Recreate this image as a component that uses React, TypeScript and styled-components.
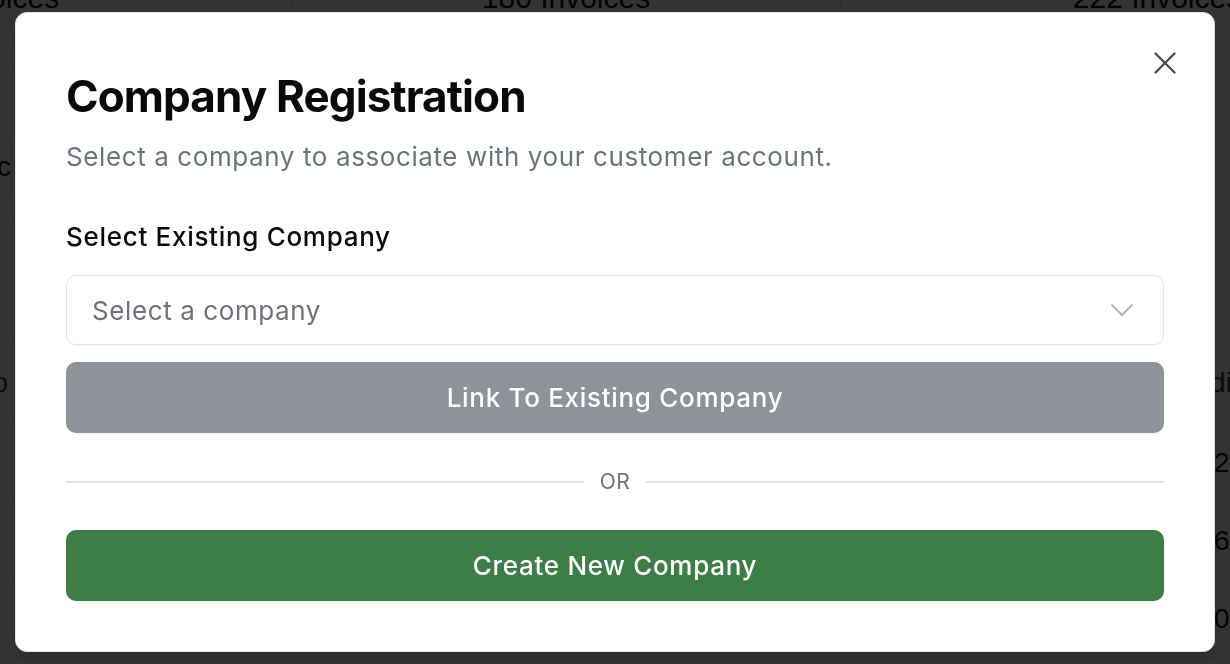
import React from "react";
import styled, { createGlobalStyle } from "styled-components";

const GlobalStyle = createGlobalStyle`
  html, body {
    margin: 0;
    padding: 0;
    background: #ffffff;
    overflow: hidden;
  }
  * {
    box-sizing: border-box;
  }
`;

const stats = [
  { label: "196 Invoices" },
  { label: "180 Invoices" },
  { label: "222 Invoices" },
];

const rows = [
  { id: 1, right: "2,450" },
  { id: 2, right: "6,120" },
  { id: 3, right: "0.00" },
  { id: 4, right: "1,300" },
];

const App = () => {
  return (
    <>
      <GlobalStyle />
      <Page>
        <StatRow>
          {stats.map((s) => (
            <StatCard key={s.label}>
              <StatLabel>{s.label}</StatLabel>
            </StatCard>
          ))}
        </StatRow>
        <Toolbar>
          <SearchBox>Sync</SearchBox>
        </Toolbar>
        <Table>
          <FilterRow />
          <TableRow $header>
            <LeftCell>Info</LeftCell>
            <RightCell>Credit</RightCell>
          </TableRow>
          {rows.map((r) => (
            <TableRow key={r.id}>
              <LeftCell />
              <RightCell $num>{r.right}</RightCell>
            </TableRow>
          ))}
        </Table>
      </Page>

      <Overlay />

      <Dialog role="dialog">
        <CloseButton aria-label="Close">
          <svg
            width="38"
            height="38"
            viewBox="0 0 24 24"
            fill="none"
            stroke="currentColor"
            strokeWidth="1.5"
            strokeLinecap="round"
            strokeLinejoin="round"
          >
            <path d="M18 6 6 18" />
            <path d="m6 6 12 12" />
          </svg>
        </CloseButton>

        <Title>Company Registration</Title>
        <Subtitle>Select a company to associate with your customer account.</Subtitle>

        <Label>Select Existing Company</Label>
        <SelectBox>
          <Placeholder>Select a company</Placeholder>
          <svg
            width="40"
            height="40"
            viewBox="0 0 24 24"
            fill="none"
            stroke="currentColor"
            strokeWidth="1.1"
            strokeLinecap="round"
            strokeLinejoin="round"
          >
            <path d="m6 9 6 6 6-6" />
          </svg>
        </SelectBox>

        <ActionButton $variant="muted">Link To Existing Company</ActionButton>

        <Divider>
          <Rule />
          <OrText>OR</OrText>
          <Rule />
        </Divider>

        <ActionButton $variant="primary">Create New Company</ActionButton>
      </Dialog>
    </>
  );
};

export default App;

/* ---------- page behind the dialog ---------- */

const Page = styled.div`
  height: 664px;
  overflow: hidden;
  font-family: "Liberation Sans", Arial, sans-serif;
  color: #111;
`;

const StatRow = styled.div`
  display: flex;
  gap: 41px;
  margin-left: -300px;
  margin-top: -40px;
`;

const StatCard = styled.div`
  flex: 0 0 550px;
  height: 106px;
  border: 1px solid #e6e6e6;
  border-top: none;
  display: flex;
  flex-direction: column;
  justify-content: flex-end;
  align-items: center;
  padding-bottom: 49px;
`;

const StatLabel = styled.div`
  font-size: 30px;
  line-height: 36px;
`;

const Toolbar = styled.div`
  height: 155px;
  display: flex;
  align-items: flex-end;
  padding-bottom: 25px;
  border-bottom: 1px solid #e6e6e6;
`;

const SearchBox = styled.div`
  width: 140px;
  height: 56px;
  margin-left: -128px;
  border: 1px solid #e6e6e6;
  display: flex;
  align-items: center;
  justify-content: flex-end;
  font-size: 28px;
`;

const Table = styled.div`
  display: flex;
  flex-direction: column;
`;

const FilterRow = styled.div`
  height: 122px;
  border-bottom: 1px solid #e6e6e6;
`;

const TableRow = styled.div<{ $header?: boolean }>`
  height: ${(p) => (p.$header ? "81px" : "78px")};
  display: flex;
  align-items: center;
  justify-content: space-between;
  border-bottom: 1px solid #e6e6e6;
  color: ${(p) => (p.$header ? "#3a3a3a" : "#111")};
  font-size: 28px;
`;

const LeftCell = styled.div`
  width: 108px;
  margin-left: -100px;
  text-align: right;
  white-space: nowrap;
`;

const RightCell = styled.div<{ $num?: boolean }>`
  width: ${(p) => (p.$num ? "16px" : "65px")};
  white-space: nowrap;
`;

const Overlay = styled.div`
  position: fixed;
  inset: 0;
  background: rgba(0, 0, 0, 0.8);
`;

/* ---------- dialog ---------- */

const Dialog = styled.div`
  position: fixed;
  left: 50%;
  top: 50%;
  transform: translate(-50%, -50%);
  width: 1200px;
  padding: 50px;
  background: #ffffff;
  border: 1px solid #e4e4e7;
  border-radius: 12px;
  box-shadow: 0 10px 15px -3px rgba(0, 0, 0, 0.1), 0 4px 6px -4px rgba(0, 0, 0, 0.1);
  font-family: Inter, "Noto Sans", sans-serif;
  display: flex;
  flex-direction: column;
`;

const CloseButton = styled.button`
  position: absolute;
  top: 31px;
  right: 30px;
  width: 38px;
  height: 38px;
  padding: 0;
  border: none;
  background: transparent;
  color: #4b4b4f;
  display: flex;
  cursor: pointer;
`;

const Title = styled.h2`
  margin: 0;
  font-size: 44px;
  line-height: 66px;
  font-weight: 700;
  letter-spacing: -0.02em;
  color: #0a0a0a;
`;

const Subtitle = styled.p`
  margin: 10px 0 0;
  font-size: 26px;
  line-height: 36px;
  letter-spacing: 0.6px;
  color: #6b7280;
`;

const Label = styled.label`
  margin-top: 44px;
  font-size: 26px;
  line-height: 36px;
  letter-spacing: 0.7px;
  font-weight: 500;
  color: #0a0a0a;
`;

const SelectBox = styled.div`
  margin-top: 20px;
  height: 70px;
  border: 1.5px solid #e4e4e7;
  border-radius: 10px;
  box-shadow: 0 1px 2px rgba(0, 0, 0, 0.04);
  display: flex;
  align-items: center;
  justify-content: space-between;
  padding: 0 21px 0 25px;
  color: #b4b4b8;
`;

const Placeholder = styled.span`
  font-size: 26px;
  letter-spacing: 0.6px;
  color: #71717a;
`;

const ActionButton = styled.button<{ $variant: "muted" | "primary" }>`
  margin-top: ${(p) => (p.$variant === "muted" ? "17px" : "0")};
  height: 71px;
  width: 100%;
  border: none;
  border-radius: 10px;
  background: ${(p) => (p.$variant === "muted" ? "#8f929a" : "#3d7e46")};
  color: #ffffff;
  font-family: Inter, "Noto Sans", sans-serif;
  font-size: 26px;
  letter-spacing: 0.7px;
  font-weight: 500;
  box-shadow: 0 1px 3px rgba(0, 0, 0, 0.08);
  cursor: pointer;
`;

const Divider = styled.div`
  margin: 37px 0 36px;
  height: 24px;
  display: flex;
  align-items: center;
  gap: 16px;
`;

const Rule = styled.div`
  flex: 1;
  height: 1.5px;
  background: #e4e4e7;
`;

const OrText = styled.span`
  font-size: 21px;
  line-height: 24px;
  letter-spacing: 0.4px;
  color: #71717a;
`;
